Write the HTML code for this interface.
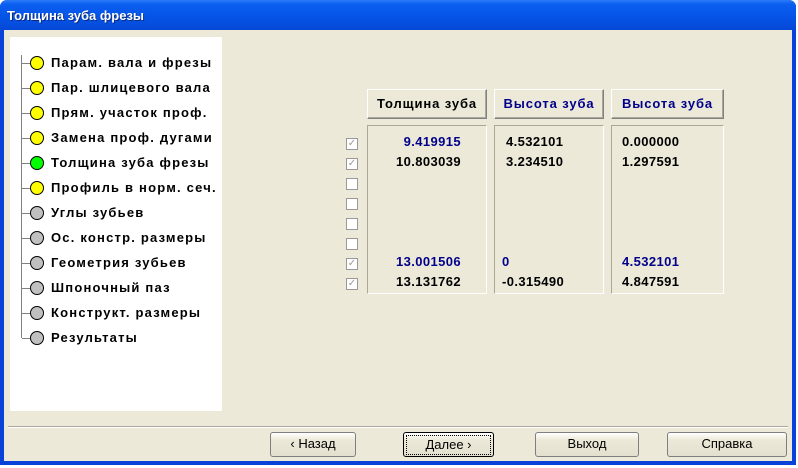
<!DOCTYPE html>
<html><head><meta charset="utf-8"><style>
*{margin:0;padding:0;box-sizing:border-box}
body{width:798px;height:468px;overflow:hidden;background:#fff;font-family:"Liberation Sans",sans-serif;position:relative}
.win{position:absolute;left:0;top:0;width:796px;height:465px;background:#0842d8;border-radius:7px 7px 0 0}
.title{position:absolute;left:0;top:0;width:796px;height:30px;border-radius:7px 7px 0 0;background:linear-gradient(#2a7af8,#0a5ef0 15%,#0553e6 60%,#0648d6);}
.title span{position:absolute;left:7px;top:8px;color:#fff;font-weight:bold;font-size:13px;text-shadow:1px 1px #0a2a80;white-space:nowrap}
.client{position:absolute;left:4px;top:30px;width:788px;height:431px;background:#ece9d8}
.panel{position:absolute;left:10px;top:37px;width:212px;height:374px;background:#fff}
.item{position:absolute;left:51px;font-size:13px;font-weight:bold;color:#000;letter-spacing:1.2px;white-space:nowrap}
.c{position:absolute;left:30px;width:14px;height:14px;border:1px solid #000;border-radius:50%}
.h{position:absolute;left:22px;width:8px;height:1px;background:#808080}
.btn{position:absolute;background:#ece9d8;border:1px solid;border-color:#fff #808080 #808080 #fff;box-shadow:inset -1px -1px #aca899;font-size:13px;text-align:center;white-space:nowrap;letter-spacing:0.9px}
.box{position:absolute;top:125px;height:169px;border:1px solid;border-color:#aca899 #fff #fff #aca899}
.v{position:absolute;font-size:13px;font-weight:bold;letter-spacing:0.4px;white-space:nowrap}
.cb{position:absolute;left:346px;width:12px;height:12px;border:1px solid #999;background:#fff;font-size:10px;color:#999;line-height:10px;text-align:center}
.bb{position:absolute;top:432px;height:25px;background:linear-gradient(#fff,#ece9d8 30%,#e3e0cf);border:1px solid #7f7f7f;border-radius:3px;font-size:13px;text-align:center;line-height:22px;white-space:nowrap}
</style></head><body>
<div class="win"></div>
<div class="title"><span>Толщина зуба фрезы</span></div>
<div class="client"></div>
<div class="panel"></div>
<div style="position:absolute;left:21px;top:55px;width:1px;height:283px;background:#808080"></div>
<div style="position:absolute;left:0;top:0">
<div class="h" style="top:63px"></div><div class="c" style="top:56px;background:#ff0"></div><div class="item" style="top:55px">Парам. вала и фрезы</div>
<div class="h" style="top:88px"></div><div class="c" style="top:81px;background:#ff0"></div><div class="item" style="top:80px">Пар. шлицевого вала</div>
<div class="h" style="top:113px"></div><div class="c" style="top:106px;background:#ff0"></div><div class="item" style="top:105px">Прям. участок проф.</div>
<div class="h" style="top:138px"></div><div class="c" style="top:131px;background:#ff0"></div><div class="item" style="top:130px">Замена проф. дугами</div>
<div class="h" style="top:163px"></div><div class="c" style="top:156px;background:#0f0"></div><div class="item" style="top:155px">Толщина зуба фрезы</div>
<div class="h" style="top:188px"></div><div class="c" style="top:181px;background:#ff0"></div><div class="item" style="top:180px">Профиль в норм. сеч.</div>
<div class="h" style="top:213px"></div><div class="c" style="top:206px;background:#c0c0c0"></div><div class="item" style="top:205px">Углы зубьев</div>
<div class="h" style="top:238px"></div><div class="c" style="top:231px;background:#c0c0c0"></div><div class="item" style="top:230px">Ос. констр. размеры</div>
<div class="h" style="top:263px"></div><div class="c" style="top:256px;background:#c0c0c0"></div><div class="item" style="top:255px">Геометрия зубьев</div>
<div class="h" style="top:288px"></div><div class="c" style="top:281px;background:#c0c0c0"></div><div class="item" style="top:280px">Шпоночный паз</div>
<div class="h" style="top:313px"></div><div class="c" style="top:306px;background:#c0c0c0"></div><div class="item" style="top:305px">Конструкт. размеры</div>
<div class="h" style="top:338px"></div><div class="c" style="top:331px;background:#c0c0c0"></div><div class="item" style="top:330px">Результаты</div>
</div>
<div class="btn" style="left:367px;top:89px;width:120px;height:30px;line-height:27px;font-weight:bold">Толщина зуба</div>
<div class="btn" style="left:494px;top:89px;width:110px;height:30px;line-height:27px;font-weight:bold;color:#00008b">Высота зуба</div>
<div class="btn" style="left:611px;top:89px;width:113px;height:30px;line-height:27px;font-weight:bold;color:#00008b">Высота зуба</div>
<div class="box" style="left:367px;width:120px"></div>
<div class="box" style="left:494px;width:110px"></div>
<div class="box" style="left:611px;width:113px"></div>
<div class="cb" style="top:138px">✓</div><div class="cb" style="top:158px">✓</div>
<div class="cb" style="top:178px"></div><div class="cb" style="top:198px"></div><div class="cb" style="top:218px"></div><div class="cb" style="top:238px"></div>
<div class="cb" style="top:258px">✓</div><div class="cb" style="top:278px">✓</div>
<div class="v" style="right:337px;top:134px;color:#00008b">9.419915</div>
<div class="v" style="right:337px;top:154px">10.803039</div>
<div class="v" style="right:337px;top:254px;color:#00008b">13.001506</div>
<div class="v" style="right:337px;top:274px">13.131762</div>
<div class="v" style="left:506px;top:134px">4.532101</div>
<div class="v" style="left:506px;top:154px">3.234510</div>
<div class="v" style="left:502px;top:254px;color:#00008b">0</div>
<div class="v" style="left:502px;top:274px">-0.315490</div>
<div class="v" style="left:622px;top:134px">0.000000</div>
<div class="v" style="left:622px;top:154px">1.297591</div>
<div class="v" style="left:622px;top:254px;color:#00008b">4.532101</div>
<div class="v" style="left:622px;top:274px">4.847591</div>
<div style="position:absolute;left:8px;top:426px;width:780px;height:2px;border-top:1px solid #aca899;border-bottom:1px solid #fff"></div>
<div class="bb" style="left:270px;width:86px">‹ Назад</div>
<div class="bb" style="left:403px;width:91px;border:1px solid #000"><div style="margin:2px;border:1px dotted #000;line-height:18px;height:20px">Далее ›</div></div>
<div class="bb" style="left:535px;width:104px">Выход</div>
<div class="bb" style="left:667px;width:120px">Справка</div>
</body></html>
